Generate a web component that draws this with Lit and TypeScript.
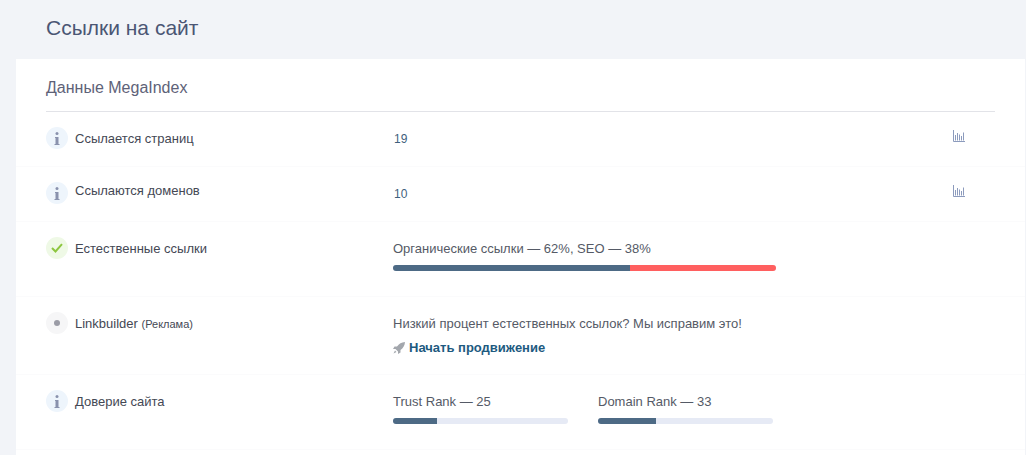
import { LitElement, html, css } from "lit";
import { customElement } from "lit/decorators.js";

const chart = html`<svg class="chart" width="13" height="12" viewBox="0 0 13 12"><path d="M.5 0v11.500H12" fill="none" stroke="#8c9bbd"/><path d="M2.500 5v5.500M4.500 3v7.500M6.500 4.500v6M8.500 6v4.500M10.500 2.500v8" fill="none" stroke="#8c9bbd"/></svg>`;

const info = html`<span class="badge info"><svg width="6" height="13" viewBox="0 0 6 13"><rect x="1.500" y="0" width="3" height="3" rx="1.500" fill="#8a92ad"/><path d="M1 5h3.500v7H5.500v1H.5v-1h1V6H1z" fill="#8a92ad"/></svg></span>`;

@customElement("app-root")
export class AppRoot extends LitElement {
  static styles = css`
    :host { display: block; width: 1026px; height: 455px; overflow: hidden; background: #f2f4f8;
      font-family: "Liberation Sans", Arial, sans-serif; color: #4a4f5c; font-size: 13px; }
    h1 { margin: 0; height: 59px; box-sizing: border-box; padding: 16px 0 0 46px; font-size: 21px; line-height: 24px;
      font-weight: 400; color: #4b5674; }
    .card { margin-left: 16px; margin-right: 1px; background: #fff; padding: 0 30px; height: 396px; box-sizing: border-box; }
    h2 { margin: 0; height: 53px; box-sizing: border-box; padding: 19px 0 0; font-size: 16px; line-height: 20px; font-weight: 400;
      color: #5e6278; border-bottom: 1px solid #e2e3e8; }
    .row { display: grid; grid-template-columns: 347px 1fr 30px; margin: 0 -30px; padding: 15px 30px 0; border-bottom: 1px solid #fbfbfc; box-sizing: border-box; }
    .r1, .r2 { height: 55px; }
    .r3, .r5 { height: 75px; }
    .r4 { height: 78px; }
    .label { display: flex; gap: 7px; align-items: flex-start; line-height: 16px; color: #444854; }
    .label span.t { padding-top: 4px; }
    .r2 .label span.t { padding-top: 1px; }
    .badge { flex: none; width: 22px; height: 22px; border-radius: 50%; display: flex; align-items: center; justify-content: center; }
    .info { background: #eef5fc; }
    .ok { background: #eff9e6; }
    .ad { background: #f6f6f7; }
    .dot { width: 6px; height: 6px; border-radius: 50%; background: #9b9ca6; }
    small { font-size: 11px; }
    .val { color: #555a66; line-height: 16px; }
    .num { color: #3f5f7d; padding-top: 4px; padding-left: 1px; font-size: 12px; }
    .act { padding-top: 3px; }
    .chart { display: block; margin-left: -12px; }
    .bar { display: flex; height: 6px; border-radius: 3px; overflow: hidden; background: #e6eaf5; margin-top: 8px; }
    .fill { background: #4d6a85; }
    .red { background: #ff5f5f; flex: 1; }
    .b3 { width: 383px; }
    .pair { display: flex; gap: 30px; }
    .pair > div { width: 175px; }
    .link { display: flex; align-items: center; gap: 4px; margin-top: 8px; font-weight: 700; color: #1d5a80; line-height: 16px; }
    .p-top { padding-top: 4px; }
  `;

  render() {
    return html`
      <h1>Ссылки на сайт</h1>
      <div class="card">
        <h2>Данные MegaIndex</h2>
        <div class="row r1">
          <div class="label">${info}<span class="t">Ссылается страниц</span></div>
          <div class="val num">19</div>
          <div class="act">${chart}</div>
        </div>
        <div class="row r2">
          <div class="label">${info}<span class="t">Ссылаются доменов</span></div>
          <div class="val num">10</div>
          <div class="act">${chart}</div>
        </div>
        <div class="row r3">
          <div class="label"><span class="badge ok"><svg width="12" height="10" viewBox="0 0 12 10"><path d="M1 5l3.500 3.500L11 1.200" fill="none" stroke="#8dc63f" stroke-width="2"/></svg></span><span class="t">Естественные ссылки</span></div>
          <div class="val p-top">Органические ссылки — 62%, SEO — 38%
            <div class="bar b3"><div class="fill" style="width:62%"></div><div class="red"></div></div>
          </div>
          <div></div>
        </div>
        <div class="row r4">
          <div class="label"><span class="badge ad"><span class="dot"></span></span><span class="t">Linkbuilder <small>(Реклама)</small></span></div>
          <div class="val p-top">Низкий процент естественных ссылок? Мы исправим это!
            <div class="link"><svg width="12" height="12" viewBox="0 0 12 12"><path d="M12 0C8.500.2 6 1.800 4 4.500H1.500L0 7h2.500l2.500 2.500V12l2.500-1.500V8C10.200 6 11.800 3.500 12 0zM2 8.500L.5 11.500 3.500 10z" fill="#a3a7ad"/></svg>Начать продвижение</div>
          </div>
          <div></div>
        </div>
        <div class="row r5">
          <div class="label">${info}<span class="t">Доверие сайта</span></div>
          <div class="val p-top pair">
            <div>Trust Rank — 25<div class="bar"><div class="fill" style="width:25%"></div></div></div>
            <div>Domain Rank — 33<div class="bar"><div class="fill" style="width:33%"></div></div></div>
          </div>
          <div></div>
        </div>
      </div>
    `;
  }
}
